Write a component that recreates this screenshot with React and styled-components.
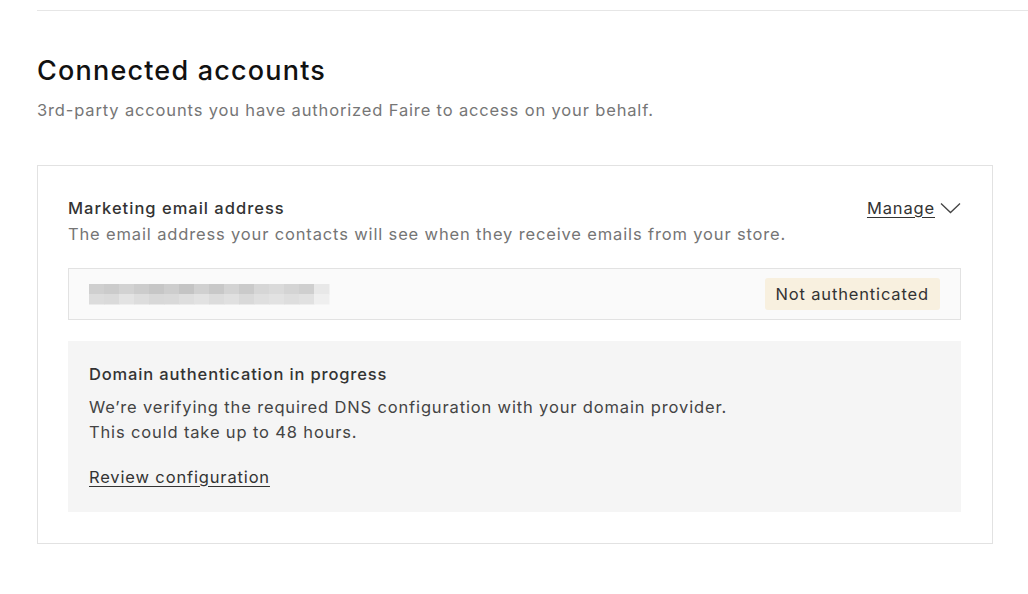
import React from 'react';
import styled, { createGlobalStyle } from 'styled-components';

const GlobalStyle = createGlobalStyle`
  html, body {
    margin: 0;
    padding: 0;
    background: #fff;
  }
  body {
    font-family: Inter, "Noto Sans", sans-serif;
    color: #333;
  }
`;

const Page = styled.div`
  width: 1028px;
  height: 594px;
  padding-left: 37px;
  box-sizing: border-box;
  overflow: hidden;
`;

const TopRule = styled.div`
  margin-top: 10px;
  height: 1px;
  background: #e6e6e6;
`;

const Section = styled.section`
  width: 956px;
  padding-top: 44px;
`;

const Title = styled.h2`
  margin: 0;
  font-size: 27px;
  line-height: 32px;
  font-weight: 500;
  color: #111;
  letter-spacing: 1.2px;
`;

const Subtitle = styled.p`
  margin: 12px 0 0;
  font-size: 16.5px;
  line-height: 22px;
  letter-spacing: 0.85px;
  color: #767676;
`;

const Card = styled.div`
  margin-top: 44px;
  border: 1px solid #e2e2e2;
  padding: 31px 31px 31px 30px;
  font-size: 16.5px;
  letter-spacing: 0.85px;
`;

const HeaderRow = styled.div`
  display: flex;
  justify-content: space-between;
  align-items: flex-start;
`;

const Label = styled.div`
  line-height: 22px;
  font-weight: 500;
  letter-spacing: 1px;
  color: #333;
`;

const Description = styled.div`
  line-height: 22px;
  color: #757575;
  margin-top: 4px;
`;

const ManageLink = styled.a`
  display: flex;
  align-items: center;
  gap: 5px;
  line-height: 22px;
  color: #333;
  text-decoration: underline;
  text-underline-offset: 3px;
  cursor: pointer;
`;

const EmailRow = styled.div`
  margin-top: 23px;
  height: 52px;
  box-sizing: border-box;
  display: flex;
  align-items: center;
  justify-content: space-between;
  padding: 0 20px;
  background: #fafafa;
  border: 1px solid #e2e2e2;
`;

const Badge = styled.span`
  line-height: 32px;
  padding: 0 11px 0 10px;
  background: #f8f0df;
  color: #333;
  border-radius: 3px;
`;

const Notice = styled.div`
  margin-top: 21px;
  background: #f5f5f5;
  padding: 22px 21px 24px 21px;
`;

const NoticeTitle = styled.div`
  line-height: 22px;
  font-weight: 500;
  color: #333;
`;

const NoticeText = styled.p`
  margin: 10px 0 0;
  line-height: 25px;
  color: #444;
`;

const ReviewLink = styled.a`
  display: inline-block;
  margin-top: 21px;
  line-height: 22px;
  color: #333;
  text-decoration: underline;
  text-underline-offset: 3px;
  cursor: pointer;
`;

const Chevron = () => (
  <svg width="21" height="12" viewBox="0 0 21 12" fill="none">
    <path d="M1 1.5L10.5 10.5L20 1.5" stroke="#444" strokeWidth="1.3" />
  </svg>
);

// pixelated placeholder for the hidden email address
const shades = [
  ['#cfcfcf', '#cbcbcb', '#d2d2d2', '#cccccc', '#c6c6c6', '#cdcdcd', '#c4c4c4', '#d0d0d0', '#c8c8c8', '#d3d3d3', '#cacaca', '#d6d6d6', '#dadada', '#d4d4d4', '#cfcfcf', '#e8e8e8'],
  ['#dcdcdc', '#dadada', '#e3e3e3', '#dddddd', '#d8d8d8', '#d9d9d9', '#dedede', '#e2e2e2', '#dcdcdc', '#e0e0e0', '#d9d9d9', '#dfdfdf', '#e2e2e2', '#dedede', '#e1e1e1', '#efefef'],
];

const BlurredEmail = () => (
  <svg width="244" height="22" viewBox="0 0 244 22">
    {shades.map((row, r) =>
      row.map((c, i) => (
        <rect key={`${r}-${i}`} x={i * 15} y={r * 10 + 1} width="15.5" height="10.5" fill={c} />
      ))
    )}
  </svg>
);

export default function App() {
  return (
    <Page>
      <GlobalStyle />
      <TopRule />
      <Section>
        <Title>Connected accounts</Title>
        <Subtitle>3rd-party accounts you have authorized Faire to access on your behalf.</Subtitle>
        <Card>
          <HeaderRow>
            <div>
              <Label>Marketing email address</Label>
              <Description>The email address your contacts will see when they receive emails from your store.</Description>
            </div>
            <ManageLink>
              Manage
              <Chevron />
            </ManageLink>
          </HeaderRow>
          <EmailRow>
            <BlurredEmail />
            <Badge>Not authenticated</Badge>
          </EmailRow>
          <Notice>
            <NoticeTitle>Domain authentication in progress</NoticeTitle>
            <NoticeText>
              We’re verifying the required DNS configuration with your domain provider.
              <br />
              This could take up to 48 hours.
            </NoticeText>
            <ReviewLink>Review configuration</ReviewLink>
          </Notice>
        </Card>
      </Section>
    </Page>
  );
}
